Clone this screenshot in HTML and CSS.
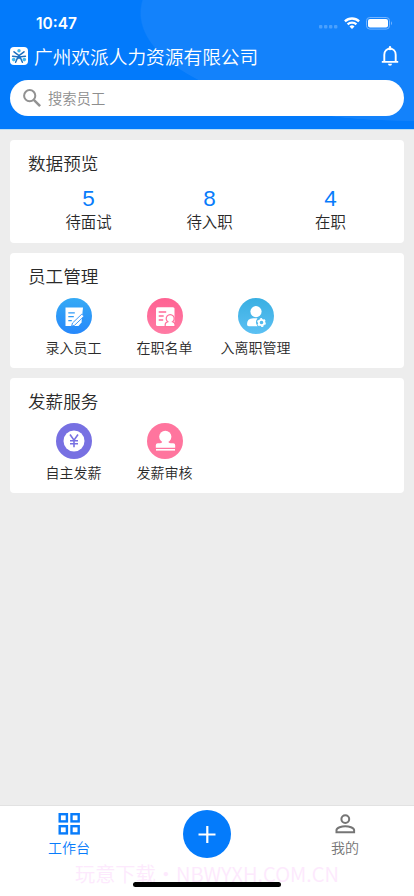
FILE: index.html
```html
<!DOCTYPE html>
<html lang="zh-CN">
<head>
<meta charset="utf-8">
<meta name="viewport" content="width=device-width, initial-scale=1">
<title>工作台</title>
<link rel="stylesheet" href="styles.css">
</head>
<body>
<div class="app">
  <header class="header">
    <div class="status">
      <span class="time">10:47</span>
      <div class="signals">
        <svg width="20" height="4" viewBox="0 0 20 4" fill="#4ba0fd"><rect x="1" width="3.4" height="3.6" rx="1"/><rect x="6" width="3.4" height="3.6" rx="1"/><rect x="11" width="3.4" height="3.6" rx="1"/><rect x="16" width="3.4" height="3.6" rx="1"/></svg>
        <svg class="wifi" width="16" height="12" viewBox="0 0 16 12" fill="none" stroke="#fff" stroke-width="2.3"><path d="M.9 4.4a10.2 10.2 0 0 1 14.2 0M3.6 7.4a6.3 6.3 0 0 1 8.8 0"/><path d="M8 11.9 5.5 9.4a3.6 3.6 0 0 1 5 0Z" fill="#fff" stroke="none"/></svg>
        <svg class="battery" width="27" height="13" viewBox="0 0 27 13"><rect x=".5" y=".5" width="23" height="11.6" rx="3.3" fill="none" stroke="#75b5ff"/><rect x="2" y="2" width="20" height="8.6" rx="2" fill="#fff"/><path d="M25 4.3q2 2 0 4Z" fill="#75b5ff"/></svg>
      </div>
    </div>
    <div class="company">
      <svg width="18" height="18" viewBox="0 0 18 18"><rect width="18" height="18" rx="4" fill="#fff"/><circle cx="9" cy="3.7" r="1.7" fill="#43b9ed"/><circle cx="3.7" cy="12.6" r="1.8" fill="#43b9ed"/><circle cx="14.3" cy="12.6" r="1.8" fill="#43b9ed"/><g fill="none" stroke="#1a6fc0" stroke-width="1.5" stroke-linecap="round"><path d="M4 4.8 9 8.6l5-3.8M2.600 9.300 8 9.800 5.600 15.300M15.400 9.300 10 9.800l2.400 5.500M9 8.600v3"/></g></svg>
      <h1>广州欢派人力资源有限公司</h1>
      <svg class="bell" width="18" height="20" viewBox="0 0 18 20" fill="none" stroke="#fff" stroke-width="1.9"><path d="M.8 15.900h16.400M3.300 15.500V8.800C3.300 5.200 5.700 2.800 9 2.800s5.700 2.400 5.700 6v6.700"/><path d="M9 3V1.200" stroke-width="2.400" stroke-linecap="round"/><path d="M7 17.700h4a2 2 0 0 1-4 0Z" fill="#fff" stroke="none"/></svg>
    </div>
    <div class="search">
      <svg width="18" height="18" viewBox="0 0 18 18" fill="none" stroke="#929292" stroke-width="2"><circle cx="6.700" cy="6.700" r="5.600"/><path d="m10.800 10.800 6.300 6.300" stroke-width="2.500"/></svg>
      <span>搜索员工</span>
    </div>
  </header>
  <main class="content">
    <section class="card overview">
      <h2>数据预览</h2>
      <div class="stats">
        <div class="stat"><b>5</b><span>待面试</span></div>
        <div class="stat"><b>8</b><span>待入职</span></div>
        <div class="stat"><b>4</b><span>在职</span></div>
      </div>
    </section>
    <section class="card service">
      <h2>员工管理</h2>
      <div class="grid">
        <div class="item">
          <svg width="36" height="36" viewBox="0 0 36 36"><defs><linearGradient id="blue" x2="0" y2="1"><stop stop-color="#35aaf5"/><stop offset="1" stop-color="#2788fb"/></linearGradient></defs><circle cx="18" cy="18" r="18" fill="url(#blue)"/><path d="M9.500 9.500H27l-1.500 15-3 3.500H9.500Z" fill="#fff"/><path d="M12.300 14.800h6.500M12.300 18.700h5.500M12.300 22.600h3.500" stroke="#2f9bf7" stroke-width="1.200"/><path d="m15.600 28.200.9-3.200 9.300-8.900 2.200 2.200-9.500 9Z" fill="#fff" stroke="#2b90f9" stroke-width=".9"/></svg>
          <span>录入员工</span>
        </div>
        <div class="item">
          <svg width="36" height="36" viewBox="0 0 36 36"><defs><linearGradient id="pink" x2="0" y2="1"><stop stop-color="#ff6292"/><stop offset="1" stop-color="#ff7ba4"/></linearGradient></defs><circle cx="18" cy="18" r="18" fill="url(#pink)"/><rect x="9" y="9.300" width="18.500" height="18.700" rx="1.500" fill="#fff"/><path d="M11.700 14h7.500M11.700 18h5M11.700 22h4.500" stroke="#ff6b98" stroke-width="1.300"/><path d="M18.200 28.600v-2q0-2 2.600-2.800a4 4 0 1 1 4.800 0q2.400.800 2.400 2.800v2Z" fill="#fff" stroke="#ff6f9b" stroke-width="1.200"/></svg>
          <span>在职名单</span>
        </div>
        <div class="item">
          <svg width="36" height="36" viewBox="0 0 36 36"><defs><linearGradient id="cyan" x2="0" y2="1"><stop stop-color="#39afe2"/><stop offset="1" stop-color="#5cc0f3"/></linearGradient></defs><circle cx="18" cy="18" r="18" fill="url(#cyan)"/><circle cx="18" cy="13.600" r="5.600" fill="#fff"/><path d="M9 26.200q0-6 6.200-6h4.300q-3.200 4 .1 8H10.800Q9 28.200 9 26.200Z" fill="#fff"/><circle cx="23.500" cy="24.500" r="2.700" fill="none" stroke="#fff" stroke-width="1.800"/><circle cx="23.500" cy="24.500" r="3.800" fill="none" stroke="#fff" stroke-width="1.200" stroke-dasharray="2.200 1.780"/></svg>
          <span>入离职管理</span>
        </div>
      </div>
    </section>
    <section class="card service">
      <h2>发薪服务</h2>
      <div class="grid">
        <div class="item">
          <svg width="36" height="36" viewBox="0 0 36 36"><circle cx="18" cy="18" r="18" fill="#7770e2"/><circle cx="18" cy="18" r="10.500" fill="#fff"/><path d="m14 11.500 4 5.700 4-5.700M18 17v7.300M14 17.700h8M14 20.800h8" fill="none" stroke="#7770e2" stroke-width="1.600"/></svg>
          <span>自主发薪</span>
        </div>
        <div class="item">
          <svg width="36" height="36" viewBox="0 0 36 36" fill="#fff"><circle cx="18" cy="18" r="18" fill="#ff759e"/><circle cx="18.300" cy="13.800" r="6.100"/><path d="M15.500 17h5.600q0 3.200 2.600 3.200h2.500q2 0 2 2v2.500H8.800v-2.500q0-2 2-2h2.100q2.600 0 2.600-3.200Z"/><path d="M9 26h19v1.600H9z"/></svg>
          <span>发薪审核</span>
        </div>
      </div>
    </section>
  </main>
  <nav class="tabs">
    <div class="tab active">
      <svg width="22" height="22" viewBox="0 0 22 22" fill="none" stroke="#087cfb" stroke-width="2.400"><rect x="1.700" y="1.200" width="7.200" height="7.200"/><rect x="13.500" y="1.200" width="7.200" height="7.200"/><rect x="1.700" y="13.200" width="7.200" height="7.200"/><rect x="13.500" y="13.200" width="7.200" height="7.200"/></svg>
      <span>工作台</span>
    </div>
    <div class="add"><svg width="48" height="48" viewBox="0 0 48 48"><circle cx="24" cy="24" r="24" fill="#047bfb"/><path d="M15.500 24.500h17M24.300 16v17" stroke="#fff" stroke-width="2.200"/></svg></div>
    <div class="tab">
      <svg width="22" height="22" viewBox="0 0 22 22" fill="none" stroke="#757575" stroke-width="2"><circle cx="11.300" cy="6.100" r="3.900"/><path d="M2.500 19.300v-2.200c0-2.500 5.300-3.900 8.800-3.900s8.800 1.400 8.800 3.900v2.200Z"/></svg>
      <span>我的</span>
    </div>
    <div class="watermark">玩意下载・NBWYXH.COM.CN</div>
    <div class="home-bar"></div>
  </nav>
</div>
</body>
</html>
```
FILE: styles.css
```css
* { box-sizing: border-box; }
body {
  margin: 0;
  font-family: "Noto Sans CJK SC", sans-serif;
  font-weight: 350;
  color: #2a2a2a;
}
h1, h2 { margin: 0; font-weight: 350; }
svg { display: block; flex: none; }
.app {
  height: 896px;
  display: flex;
  flex-direction: column;
  overflow: hidden;
  background: #ededed;
}
.header {
  height: 130px;
  flex: none;
  padding: 13px 10px 0;
  color: #fff;
  background: radial-gradient(ellipse 268px 108px at 408px 13px, #1382fb 99.5%, transparent 100%) #027afb;
  border-bottom: 1px solid #b9dcf4;
}
.status {
  height: 20px;
  display: flex;
  justify-content: space-between;
  align-items: center;
  padding: 0 11px 0 26px;
}
.time {
  font: 600 15.5px/20px Inter, sans-serif;
  padding-top: 1px;
}
.signals { display: flex; align-items: center; }
.signals svg:first-child { margin-top: 8px; }
.wifi { margin-left: 6px; }
.battery { margin-left: 6px; }
.company {
  height: 28px;
  margin-top: 9px;
  display: flex;
  align-items: center;
}
.company h1 {
  margin-left: 6px;
  font-size: 18.7px;
  line-height: 28px;
  white-space: nowrap;
}
.bell { margin-left: auto; margin-right: 5px; }
.search {
  height: 36px;
  margin-top: 10px;
  padding-left: 13px;
  display: flex;
  align-items: center;
  gap: 7px;
  border-radius: 18px;
  background: #fff;
  color: #8e8e8e;
  font-size: 14.3px;
  line-height: 20px;
}
.content {
  flex: 1;
  padding: 10px;
  display: flex;
  flex-direction: column;
  gap: 10px;
}
.card {
  padding: 10px 13px 0 18px;
  border-radius: 4px;
  background: #fff;
}
.card h2 { font-size: 17.6px; line-height: 26px; }
.overview { height: 103px; }
.service { height: 115px; }
.stats { display: grid; grid-template-columns: repeat(3, 121px); margin-top: 10px; }
.stat {
  display: flex;
  flex-direction: column;
  align-items: center;
}
.stat b {
  font: 400 22.5px/25px "Liberation Sans", sans-serif;
  color: #087cfb;
}
.stat span { font-size: 15.4px; line-height: 22px; margin-top: -1px; }
.grid { display: grid; grid-template-columns: repeat(3, 91px); margin-top: 9px; }
.item {
  display: flex;
  flex-direction: column;
  align-items: center;
  gap: 3px;
  font-size: 14px;
  line-height: 20px;
  white-space: nowrap;
}
.tabs {
  position: relative;
  height: 91px;
  flex: none;
  display: grid;
  grid-template-columns: repeat(3, 1fr);
  justify-items: center;
  align-items: start;
  background: #fff;
  border-top: 1px solid #e2e2e2;
}
.tab {
  padding-top: 7px;
  display: flex;
  flex-direction: column;
  align-items: center;
  gap: 2px;
  font-size: 14px;
  line-height: 20px;
  color: #757575;
}
.active { color: #087cfb; }
.add { padding-top: 4px; }
.watermark {
  position: absolute;
  left: 0;
  right: 0;
  top: 54px;
  text-align: center;
  font-size: 20.2px;
  line-height: 28px;
  color: #fde9fd;
  white-space: nowrap;
}
.home-bar {
  position: absolute;
  left: 133px;
  top: 76px;
  width: 148px;
  height: 5px;
  border-radius: 3px;
  background: #000;
}
```
